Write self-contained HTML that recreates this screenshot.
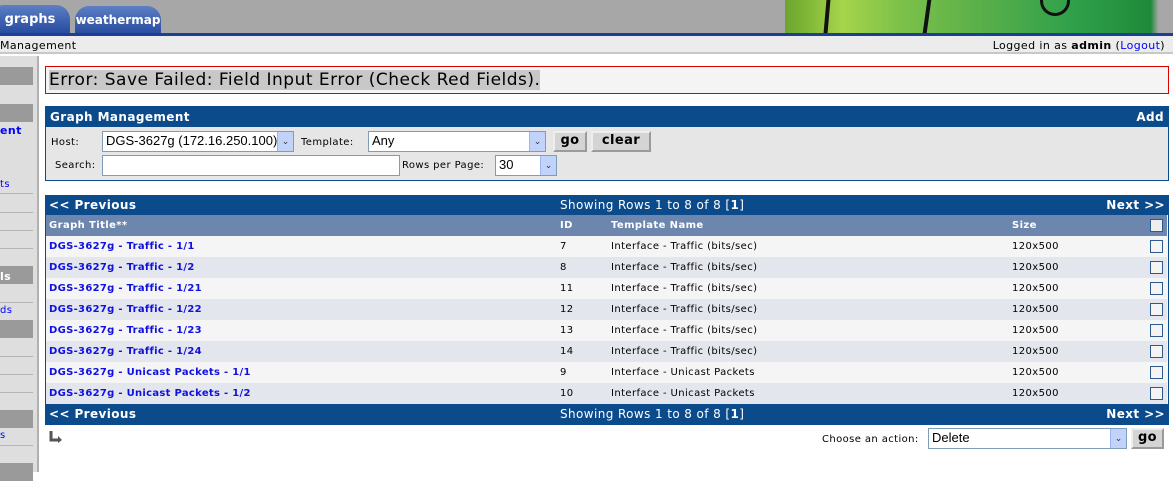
<!DOCTYPE html><html><head><style>
*{box-sizing:border-box}
body{margin:0;width:1173px;height:472px;overflow:hidden;background:#fff;font-family:Verdana,"DejaVu Sans",sans-serif;font-size:10px;position:relative;letter-spacing:0.4px}
.a{position:absolute}
.tab{position:absolute;top:5px;height:29px;background:linear-gradient(#5d7fc4,#25499e);border-radius:14px 14px 0 0;color:#fff;font-weight:bold;font-family:"DejaVu Sans",sans-serif;padding-top:7px;text-align:center;letter-spacing:0}
.sbk{position:absolute;left:0;width:33px;height:18px;background:#9a9a9a}
.sln{position:absolute;left:0;width:33px;height:1px;background:#b5b5b5}
.blue{background:#0b4a8b;color:#fff;font-weight:bold}
.row{position:absolute;left:46px;width:1121px;height:21px;font-size:10px}
.row span{position:absolute;top:5px}
.t{left:3px;color:#1010e0;font-weight:bold;letter-spacing:0.3px}
.cb{position:absolute;left:1104px;top:4px;width:13px;height:13px;border:1px solid #2c5a8c;background:#f4f4f4}
.sel{position:absolute;background:#fff;border:1px solid #7f9db9;font-family:"Liberation Sans",sans-serif;font-size:13px;padding:1px 3px;letter-spacing:0}
.arr{position:absolute;right:0;top:0;width:16px;height:100%;background:#c1d3fb;border-left:1px solid #9fb4e8;font-size:9px;text-align:center;line-height:18px;color:#333}
.btn{position:absolute;background:#d4d4d4;border:2px outset #eee;font-weight:bold;font-size:13px;text-align:center;color:#000}
</style></head><body>
<div class="a" style="left:0;top:0;width:1173px;height:33px;background:#a7a7a7"></div>
<div class="tab" style="left:-10px;width:80px;font-size:13px">graphs</div>
<div class="tab" style="left:75px;width:86px;font-size:12px;top:6px">weathermap</div>
<div class="a" style="left:785px;top:0;width:385px;height:33px;background:linear-gradient(90deg,#6aa52c,#a6d44a 15%,#7cc14a 30%,#5bb04a 50%,#2fa04a 75%,#1f8a3a 95%,#a7a7a7 97%)"></div>
<div class="a" style="left:825px;top:0;width:4px;height:33px;background:#111;transform:skew(-5deg)"></div>
<div class="a" style="left:925px;top:0;width:4px;height:33px;background:#111;transform:skew(-8deg)"></div>
<div class="a" style="left:1040px;top:0;width:30px;height:16px;border:3px solid #111;border-top:none;border-radius:0 0 15px 15px"></div>
<div class="a" style="left:0;top:33px;width:1173px;height:3px;background:#1a3f95"></div>
<div class="a" style="left:0;top:36px;width:1173px;height:18px;background:#ececec;border-bottom:2px solid #c8c8c8"></div>
<div class="a" style="left:0;top:39px;font-size:11px">Management</div>
<div class="a" style="right:8px;top:39px;font-size:11px">Logged in as <b>admin</b> (<span style="color:#00f">Logout</span>)</div>
<div class="a" style="left:0;top:56px;width:39px;height:416px;background:#dedede;border-right:2px solid #b0b0b0"></div>
<div class="sbk" style="top:67px"></div>
<div class="sbk" style="top:104px"></div>
<div class="a" style="left:0;top:124px;color:#00f;font-weight:bold;font-size:11px">ent</div>
<div class="a" style="left:0;top:179px;color:#00f;font-size:10px">ts</div>
<div class="sln" style="top:193px"></div><div class="sln" style="top:212px"></div><div class="sln" style="top:230px"></div><div class="sln" style="top:248px"></div>
<div class="sbk" style="top:266px"></div>
<div class="a" style="left:0;top:270px;color:#fff;font-weight:bold;font-size:11px">ls</div>
<div class="sln" style="top:302px"></div>
<div class="a" style="left:0;top:305px;color:#00f;font-size:10px">ds</div>
<div class="sbk" style="top:320px"></div>
<div class="sln" style="top:356px"></div><div class="sln" style="top:374px"></div><div class="sln" style="top:392px"></div>
<div class="sbk" style="top:410px"></div>
<div class="a" style="left:0;top:430px;color:#00f;font-size:10px">s</div>
<div class="sln" style="top:445px"></div>
<div class="sbk" style="top:463px"></div>

<div class="a" style="left:45px;top:66px;width:1124px;height:28px;border:1px solid #d00;background:#f4f4f4"></div>
<div class="a" style="left:49px;top:70px;font-family:'DejaVu Sans',sans-serif;font-size:17px;letter-spacing:0.5px;background:#c8c8c8;line-height:20px">Error: Save Failed: Field Input Error (Check Red Fields).</div>

<div class="a" style="left:45px;top:106px;width:1124px;height:75px;border:1px solid #0b4a8b;background:#e6e6e6"></div>
<div class="a blue" style="left:45px;top:106px;width:1124px;height:21px;font-size:12px;padding:4px 5px">Graph Management<span style="float:right">Add</span></div>
<div class="a" style="left:51px;top:137px">Host:</div>
<div class="sel" style="left:102px;top:131px;width:192px;height:21px">DGS-3627g (172.16.250.100)<div class="arr">&#8964;</div></div>
<div class="a" style="left:301px;top:137px">Template:</div>
<div class="sel" style="left:368px;top:131px;width:178px;height:21px">Any<div class="arr">&#8964;</div></div>
<div class="btn" style="left:553px;top:131px;width:34px;height:21px">go</div>
<div class="btn" style="left:591px;top:131px;width:60px;height:21px">clear</div>
<div class="a" style="left:55px;top:160px">Search:</div>
<div class="sel" style="left:102px;top:155px;width:298px;height:21px"></div>
<div class="a" style="left:402px;top:160px">Rows per Page:</div>
<div class="sel" style="left:495px;top:155px;width:62px;height:21px">30<div class="arr">&#8964;</div></div>

<div class="a" style="left:45px;top:195px;width:1124px;height:230px;border:1px solid #0b4a8b;background:#f4f4f4"></div>
<div class="a blue" style="left:45px;top:195px;width:1124px;height:20px;font-size:12px;padding:3px 4px">&lt;&lt; Previous<span style="position:absolute;left:515px;font-weight:normal">Showing Rows 1 to 8 of 8 [<b>1</b>]</span><span style="float:right">Next &gt;&gt;</span></div>
<div class="row" style="top:215px;background:#6d86ad;color:#fff;font-weight:bold"><span style="left:3px">Graph Title**</span><span style="left:514px">ID</span><span style="left:565px">Template Name</span><span style="left:966px">Size</span><div class="cb" style="background:#eee"></div></div>

<div class="row" style="top:236px;background:#f5f5f5"><span class="t">DGS-3627g - Traffic - 1/1</span><span style="left:514px">7</span><span style="left:565px">Interface - Traffic (bits/sec)</span><span style="left:966px">120x500</span><div class="cb"></div></div>
<div class="row" style="top:257px;background:#e4e6ee"><span class="t">DGS-3627g - Traffic - 1/2</span><span style="left:514px">8</span><span style="left:565px">Interface - Traffic (bits/sec)</span><span style="left:966px">120x500</span><div class="cb"></div></div>
<div class="row" style="top:278px;background:#f5f5f5"><span class="t">DGS-3627g - Traffic - 1/21</span><span style="left:514px">11</span><span style="left:565px">Interface - Traffic (bits/sec)</span><span style="left:966px">120x500</span><div class="cb"></div></div>
<div class="row" style="top:299px;background:#e4e6ee"><span class="t">DGS-3627g - Traffic - 1/22</span><span style="left:514px">12</span><span style="left:565px">Interface - Traffic (bits/sec)</span><span style="left:966px">120x500</span><div class="cb"></div></div>
<div class="row" style="top:320px;background:#f5f5f5"><span class="t">DGS-3627g - Traffic - 1/23</span><span style="left:514px">13</span><span style="left:565px">Interface - Traffic (bits/sec)</span><span style="left:966px">120x500</span><div class="cb"></div></div>
<div class="row" style="top:341px;background:#e4e6ee"><span class="t">DGS-3627g - Traffic - 1/24</span><span style="left:514px">14</span><span style="left:565px">Interface - Traffic (bits/sec)</span><span style="left:966px">120x500</span><div class="cb"></div></div>
<div class="row" style="top:362px;background:#f5f5f5"><span class="t">DGS-3627g - Unicast Packets - 1/1</span><span style="left:514px">9</span><span style="left:565px">Interface - Unicast Packets</span><span style="left:966px">120x500</span><div class="cb"></div></div>
<div class="row" style="top:383px;background:#e4e6ee"><span class="t">DGS-3627g - Unicast Packets - 1/2</span><span style="left:514px">10</span><span style="left:565px">Interface - Unicast Packets</span><span style="left:966px">120x500</span><div class="cb"></div></div>

<div class="a blue" style="left:45px;top:404px;width:1124px;height:21px;font-size:12px;padding:3px 4px">&lt;&lt; Previous<span style="position:absolute;left:515px;font-weight:normal">Showing Rows 1 to 8 of 8 [<b>1</b>]</span><span style="float:right">Next &gt;&gt;</span></div>

<svg class="a" style="left:49px;top:430px" width="14" height="14"><path d="M2 1V10H11" stroke="#555" stroke-width="3" fill="none"/><path d="M9 6L13 10L9 13Z" fill="#555"/></svg>
<div class="a" style="left:822px;top:434px">Choose an action:</div>
<div class="sel" style="left:928px;top:428px;width:199px;height:21px">Delete<div class="arr">&#8964;</div></div>
<div class="btn" style="left:1131px;top:428px;width:33px;height:21px">go</div>
</body></html>
